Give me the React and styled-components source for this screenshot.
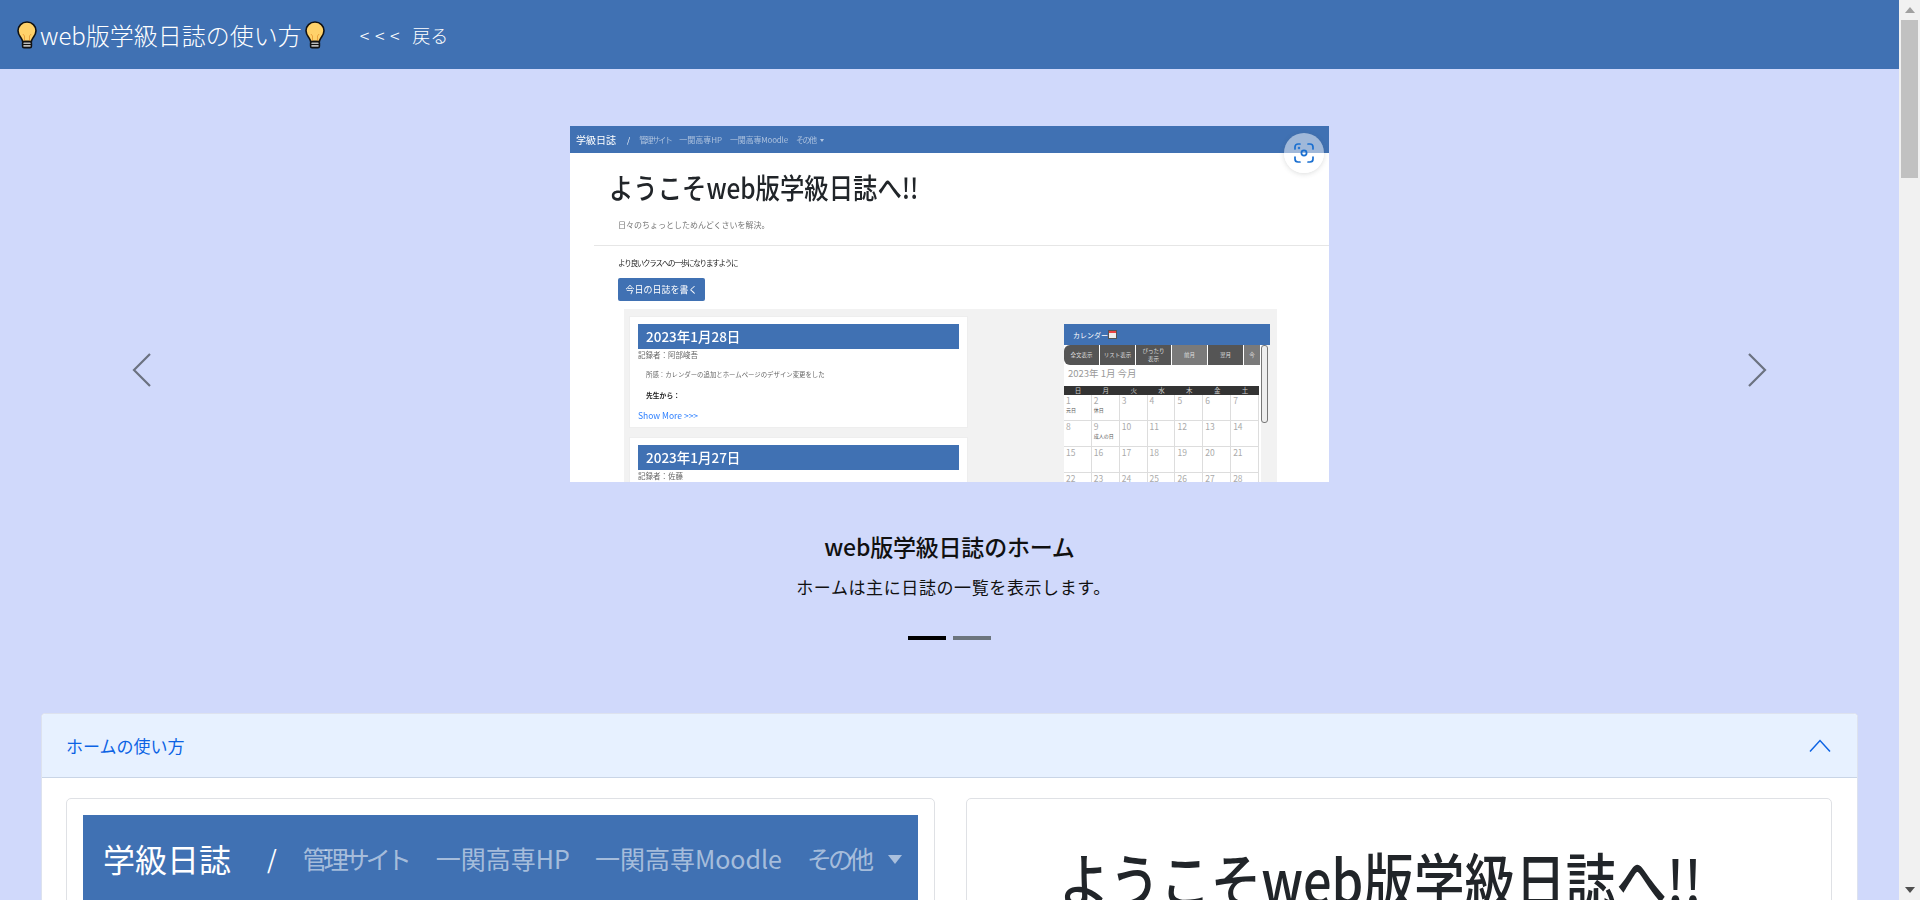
import React from "react";
import styled, { createGlobalStyle } from "styled-components";

const FONT = `"Noto Sans CJK JP", "Noto Sans", sans-serif`;
const BLUE = "#4071b3";

const Global = createGlobalStyle`
  body { margin: 0; background: #d0d9fb; font-family: ${FONT}; color: #212529; }
`;

const Page = styled.div`
  margin-right: 21px;
  display: flex;
  flex-direction: column;
`;

const ScrollRail = styled.aside`
  position: fixed;
  top: 0;
  right: 0;
  bottom: 0;
  width: 21px;
  background: #f1f1f1;
  display: flex;
  flex-direction: column;
  align-items: center;
  justify-content: space-between;
`;
const ScrollUpper = styled.div`
  display: flex;
  flex-direction: column;
  align-items: center;
`;
const ScrollArrow = styled.div`
  height: 20px;
  flex: none;
  display: flex;
  align-items: center;
  justify-content: center;
`;
const ScrollThumb = styled.div`
  width: 17px;
  height: 158px;
  background: #c1c1c1;
`;

const Navbar = styled.header`
  height: 69px;
  flex: none;
  background: ${BLUE};
  display: flex;
  align-items: center;
  padding-left: 17px;
  color: #fff;
`;
const Brand = styled.div`
  display: flex;
  align-items: center;
  font-size: 24px;
  line-height: 32px;
  font-weight: 300;
`;
const BrandText = styled.span`
  margin: 0 3px 0 3px;
`;
const BackLink = styled.a`
  margin-left: 35px;
  font-size: 18px;
  line-height: 24px;
  font-weight: 300;
  color: #fff;
`;
const BackMarks = styled.span`
  letter-spacing: 5.5px;
  margin-right: 3px;
`;

const Bulb = () => (
  <svg width="20" height="28" viewBox="0 0 20 28">
    <path d="M10 1C4.8 1 1 4.9 1 9.8c0 3.6 2.2 5.7 3.6 8 .6 1 .9 1.8 1 2.7h8.8c.1-.9.4-1.7 1-2.7 1.4-2.3 3.6-4.4 3.6-8C19 4.9 15.2 1 10 1z" fill="#ffd26a" stroke="#111" strokeWidth="1.6" />
    <path d="M7.5 20v-5l-1.6-2M12.5 20v-5l1.6-2" fill="none" stroke="#e9a13b" strokeWidth="1" />
    <rect x="5.6" y="20.6" width="8.8" height="6" rx="1.4" fill="#bbb" stroke="#111" strokeWidth="1.6" />
    <path d="M6 23.5h8" stroke="#111" strokeWidth="1" />
  </svg>
);

const Carousel = styled.section`
  position: relative;
  flex: none;
  height: 644px;
  padding-top: 57px;
  box-sizing: border-box;
  display: flex;
  flex-direction: column;
  align-items: center;
`;
const ArrowButton = styled.button`
  position: absolute;
  top: 283px;
  ${(p) => (p.$side === "left" ? "left: 130px;" : "right: 130px;")}
  width: 24px;
  height: 36px;
  padding: 0;
  border: 0;
  background: none;
  display: flex;
`;

const Shot = styled.div`
  position: relative;
  width: 759px;
  height: 356px;
  background: #fff;
  flex: none;
`;
const ShotClip = styled.div`
  height: 100%;
  overflow: hidden;
  filter: blur(0.3px);
  display: flex;
  flex-direction: column;
`;
const LensBadge = styled.div`
  position: absolute;
  top: 7px;
  right: 5px;
  width: 40px;
  height: 40px;
  border-radius: 50%;
  background: linear-gradient(to bottom, rgba(255, 255, 255, 0.5) 50%, #fff 50%);
  box-shadow: 0 1px 5px rgba(60, 64, 67, 0.18);
  display: flex;
  align-items: center;
  justify-content: center;
`;
const ShotNav = styled.div`
  flex: none;
  height: 27px;
  background: ${BLUE};
  display: flex;
  align-items: center;
  padding-left: 6px;
  color: #fff;
  white-space: nowrap;
`;
const ShotBrand = styled.span`
  font-size: 10px;
`;
const ShotSlash = styled.span`
  margin: 0 9px 0 11px;
  font-size: 8px;
`;
const ShotLink = styled.span`
  margin-right: ${(p) => p.$mr ?? 8}px;
  color: rgba(255, 255, 255, 0.55);
  font-size: 8px;
  letter-spacing: ${(p) => p.$ls || 0}px;
`;
const ShotCaret = styled.span`
  width: 0;
  height: 0;
  border: 2px solid transparent;
  border-top: 3px solid rgba(255, 255, 255, 0.6);
  margin: 3px 0 0 5px;
`;
const ShotHero = styled.div`
  flex: none;
  height: 93px;
  box-sizing: border-box;
  margin-left: 24px;
  padding-left: 16px;
  border-bottom: 1px solid #e6e6e6;
  display: flex;
  flex-direction: column;
`;
const ShotTitle = styled.h1`
  margin: 15px 0 0 -1px;
  font-size: 28px;
  line-height: 38px;
  font-weight: 500;
  color: #212529;
  white-space: nowrap;
  transform: scaleX(0.87);
  transform-origin: left center;
`;
const ShotLead = styled.p`
  margin: 12px 0 0 8px;
  font-size: 8px;
  line-height: 14px;
  color: #777;
`;
const ShotBody = styled.div`
  padding: 11px 0 0 48px;
  display: flex;
  flex-direction: column;
  min-height: 0;
  flex: 1;
`;
const ShotNote = styled.p`
  margin: 0;
  font-size: 7.5px;
  line-height: 12px;
  color: #222;
  letter-spacing: -1.2px;
`;
const ShotButton = styled.div`
  margin-top: 9px;
  width: 87px;
  height: 23px;
  flex: none;
  background: ${BLUE};
  border-radius: 2px;
  color: #fff;
  font-size: 9px;
  display: flex;
  align-items: center;
  justify-content: center;
`;
const ShotPanel = styled.div`
  margin: 8px 0 0 6px;
  width: 653px;
  flex: 1;
  min-height: 0;
  overflow: hidden;
  background: #f2f2f2;
  display: flex;
`;
const DiaryColumn = styled.div`
  margin: 7px 0 0 5px;
  width: 339px;
  flex: none;
  display: flex;
  flex-direction: column;
  gap: 9px;
`;
const DiaryCard = styled.article`
  flex: none;
  box-sizing: border-box;
  height: 112px;
  padding: 7px 8px 0;
  background: #fff;
  border: 1px solid #eee;
`;
const DiaryDate = styled.div`
  height: 25px;
  background: ${BLUE};
  color: #fff;
  font-size: 13.5px;
  font-weight: 500;
  line-height: 25px;
  padding-left: 8px;
`;
const DiaryRow = styled.div`
  margin-top: ${(p) => p.$mt || 0}px;
  padding-left: ${(p) => (p.$indent ? 8 : 0)}px;
  font-size: ${(p) => p.$fs || 7}px;
  line-height: 12px;
  color: ${(p) => p.$color || "#666"};
  font-weight: ${(p) => p.$w || 400};
  white-space: nowrap;
`;
const Calendar = styled.div`
  margin: 15px 0 0 96px;
  width: 206px;
  flex: none;
  display: flex;
  flex-direction: column;
  position: relative;
`;
const CalHead = styled.div`
  height: 21px;
  flex: none;
  background: ${BLUE};
  color: #fff;
  font-size: 7px;
  display: flex;
  align-items: center;
  padding-left: 9px;
`;
const CalIcon = styled.span`
  width: 7px;
  height: 7px;
  background: linear-gradient(#e44 0 30%, #eee 30%);
  border: 1px solid #555;
`;
const CalBody = styled.div`
  background: #fff;
  width: 197px;
  flex: 1;
`;
const CalToolbar = styled.div`
  display: grid;
  grid-template-columns: repeat(5, 36px) 1fr;
  height: 20px;
  overflow: hidden;
  border-radius: 6px 0 0 6px;
`;
const CalBtn = styled.div`
  background: ${(p) => (p.$light ? "#7a7a7a" : "#555")};
  border-right: 1px solid #fff;
  color: #ddd;
  font-size: 5.5px;
  line-height: 8px;
  display: flex;
  align-items: center;
  justify-content: center;
  text-align: center;
`;
const CalTitle = styled.div`
  height: 21px;
  padding-left: 4px;
  color: #999;
  font-size: 9.5px;
  line-height: 17px;
`;
const CalWeek = styled.div`
  display: grid;
  grid-template-columns: repeat(7, 1fr);
  width: 195px;
  height: 9px;
  background: #333;
  color: #ccc;
  font-size: 6.5px;
  line-height: 9px;
  text-align: center;
`;
const CalGrid = styled.div`
  display: grid;
  grid-template-columns: repeat(7, 1fr);
  grid-auto-rows: 26px;
  width: 195px;
`;
const CalCell = styled.div`
  box-sizing: border-box;
  border-right: 1px solid #ddd;
  border-bottom: 1px solid #ddd;
  padding-left: 2px;
  color: #aaa;
  font-size: 8.5px;
  line-height: 11px;
`;
const Holiday = styled.div`
  color: #555;
  font-size: 5px;
  line-height: 8px;
  white-space: nowrap;
`;
const CalScroll = styled.div`
  position: absolute;
  left: 197px;
  top: 21px;
  width: 5px;
  height: 76px;
  border: 1px solid #777;
  border-radius: 3px;
  background: #eee;
`;

const Caption = styled.h5`
  margin: 43px 0 0;
  font-size: 23px;
  line-height: 42px;
  font-weight: 500;
  color: #111;
  letter-spacing: -0.2px;
`;
const CaptionText = styled.p`
  margin: 3px 0 0;
  padding-left: 8px;
  font-size: 17px;
  line-height: 34px;
  letter-spacing: 0.6px;
  color: #111;
`;
const Indicators = styled.div`
  margin-top: 32px;
  display: flex;
  gap: 7px;
`;
const Indicator = styled.span`
  width: 38px;
  height: 4px;
  background: ${(p) => (p.$active ? "#000" : "#6c757d")};
`;

const Accordion = styled.section`
  margin: 0 41px;
  background: #fff;
  border: 1px solid #dde2ee;
  border-radius: 4px 4px 0 0;
  display: flex;
  flex-direction: column;
`;
const AccHeader = styled.div`
  height: 63px;
  flex: none;
  background: #e7f1ff;
  border-bottom: 1px solid #c9d5e6;
  border-radius: 4px 4px 0 0;
  display: flex;
  align-items: center;
  justify-content: space-between;
  padding: 0 26px 0 24px;
  color: #0c63e4;
  font-size: 17px;
`;
const AccBody = styled.div`
  padding: 20px 24px;
  display: grid;
  grid-template-columns: 869px 866px;
  column-gap: 31px;
  align-items: start;
`;
const Card = styled.div`
  box-sizing: border-box;
  height: 620px;
  background: #fff;
  border: 1px solid #dfe1e5;
  border-radius: 5px;
  padding: ${(p) => (p.$pad ? "16px" : "0")};
  overflow: hidden;
`;
const BigNav = styled.div`
  height: 160px;
  background: ${BLUE};
  display: flex;
  align-items: flex-start;
  padding: 25px 0 0 20px;
  color: #fff;
  white-space: nowrap;
`;
const BigBrand = styled.span`
  font-size: 32px;
  line-height: 36px;
`;
const BigSlash = styled.span`
  margin: 0 26px 0 36px;
  font-size: 25px;
  line-height: 36px;
`;
const BigLink = styled.span`
  margin-right: ${(p) => p.$mr ?? 25}px;
  font-size: 25px;
  line-height: 36px;
  letter-spacing: ${(p) => p.$ls || 0}px;
  color: rgba(255, 255, 255, 0.55);
`;
const BigCaret = styled.span`
  margin: 15px 0 0 -7px;
  width: 0;
  height: 0;
  border: 7.5px solid transparent;
  border-top: 9px solid rgba(255, 255, 255, 0.55);
`;
const BigTitle = styled.h1`
  margin: 37px 0 0 92px;
  font-size: 60px;
  line-height: 84px;
  font-weight: 500;
  color: #212529;
  white-space: nowrap;
  transform: scaleX(0.843);
  transform-origin: left center;
`;

const Chevron = ({ dir }) => (
  <svg width="24" height="36" viewBox="0 0 24 36" fill="none" stroke="#6b7280" strokeWidth="2.2">
    {dir === "left" ? <path d="M20 2L4 18l16 16" /> : <path d="M4 2l16 16L4 34" />}
  </svg>
);

const LensIcon = () => (
  <svg width="20" height="20" viewBox="0 0 20 20" fill="none" stroke="#1a6fd0" strokeWidth="1.7" strokeLinecap="round">
    <path d="M1 6V4a3 3 0 0 1 3-3h2M14 1h2a3 3 0 0 1 3 3v2M1 14v2a3 3 0 0 0 3 3h2M14 19h2a3 3 0 0 0 3-3v-2" />
    <circle cx="10" cy="10" r="2.6" />
    <circle cx="5" cy="5" r="0.4" />
  </svg>
);

const days = [
  [1, "元日"], [2, "休日"], [3], [4], [5], [6], [7],
  [8], [9, "成人の日"], [10], [11], [12], [13], [14],
  [15], [16], [17], [18], [19], [20], [21],
  [22], [23], [24], [25], [26], [27], [28],
];

export default function App() {
  return (
    <>
      <Page>
        <Global />
        <Navbar>
          <Brand>
            <Bulb />
            <BrandText>web版学級日誌の使い方</BrandText>
            <Bulb />
          </Brand>
          <BackLink><BackMarks>&lt;&lt;&lt;</BackMarks> 戻る</BackLink>
        </Navbar>

        <Carousel>
          <ArrowButton $side="left"><Chevron dir="left" /></ArrowButton>
          <ArrowButton $side="right"><Chevron dir="right" /></ArrowButton>
          <Shot>
            <ShotClip>
              <ShotNav>
                <ShotBrand>学級日誌</ShotBrand>
                <ShotSlash>/</ShotSlash>
                <ShotLink $ls={-1.6}>管理サイト</ShotLink>
                <ShotLink>一関高専HP</ShotLink>
                <ShotLink $ls={-0.2}>一関高専Moodle</ShotLink>
                <ShotLink $ls={-1.5} $mr={0}>その他</ShotLink>
                <ShotCaret />
              </ShotNav>
              <ShotHero>
                <ShotTitle>ようこそweb版学級日誌へ!!</ShotTitle>
                <ShotLead>日々のちょっとしためんどくさいを解決。</ShotLead>
              </ShotHero>
              <ShotBody>
                <ShotNote>より良いクラスへの一歩になりますように</ShotNote>
                <ShotButton>今日の日誌を書く</ShotButton>
                <ShotPanel>
                  <DiaryColumn>
                    <DiaryCard>
                      <DiaryDate>2023年1月28日</DiaryDate>
                      <DiaryRow $fs={7.5}>記録者：阿部峻吾</DiaryRow>
                      <DiaryRow $indent $fs={6.4} $mt={8}>所感：カレンダーの追加とホームページのデザイン変更をした</DiaryRow>
                      <DiaryRow $indent $fs={6.8} $mt={8} $color="#222" $w={700}>先生から：</DiaryRow>
                      <DiaryRow $fs={8.5} $mt={8} $color="#2f80ff">Show More &gt;&gt;&gt;</DiaryRow>
                    </DiaryCard>
                    <DiaryCard>
                      <DiaryDate>2023年1月27日</DiaryDate>
                      <DiaryRow $fs={7.5}>記録者：佐藤</DiaryRow>
                    </DiaryCard>
                  </DiaryColumn>
                  <Calendar>
                    <CalHead>カレンダー<CalIcon /></CalHead>
                    <CalScroll />
                    <CalBody>
                      <CalToolbar>
                        <CalBtn>全文表示</CalBtn>
                        <CalBtn>リスト表示</CalBtn>
                        <CalBtn>ぴったり<br />表示</CalBtn>
                        <CalBtn $light>前月</CalBtn>
                        <CalBtn>翌月</CalBtn>
                        <CalBtn $light>今</CalBtn>
                      </CalToolbar>
                      <CalTitle>2023年 1月 今月</CalTitle>
                      <CalWeek>
                        {["日", "月", "火", "水", "木", "金", "土"].map((d) => <span key={d}>{d}</span>)}
                      </CalWeek>
                      <CalGrid>
                        {days.map(([n, h]) => (
                          <CalCell key={n}>
                            {n}
                            {h && <Holiday>{h}</Holiday>}
                          </CalCell>
                        ))}
                      </CalGrid>
                    </CalBody>
                  </Calendar>
                </ShotPanel>
              </ShotBody>
            </ShotClip>
            <LensBadge><LensIcon /></LensBadge>
          </Shot>
          <Caption>web版学級日誌のホーム</Caption>
          <CaptionText>ホームは主に日誌の一覧を表示します。</CaptionText>
          <Indicators>
            <Indicator $active />
            <Indicator />
          </Indicators>
        </Carousel>

        <Accordion>
          <AccHeader>
            ホームの使い方
            <svg width="22" height="14" viewBox="0 0 22 14" fill="none" stroke="#0c63e4" strokeWidth="1.5">
              <path d="M1 12.5L11 1.5l10 11" />
            </svg>
          </AccHeader>
          <AccBody>
            <Card $pad>
              <BigNav>
                <BigBrand>学級日誌</BigBrand>
                <BigSlash>/</BigSlash>
                <BigLink $ls={-4} $mr={28}>管理サイト</BigLink>
                <BigLink>一関高専HP</BigLink>
                <BigLink>一関高専Moodle</BigLink>
                <BigLink $ls={-4}>その他</BigLink>
                <BigCaret />
              </BigNav>
            </Card>
            <Card>
              <BigTitle>ようこそweb版学級日誌へ!!</BigTitle>
            </Card>
          </AccBody>
        </Accordion>
      </Page>
      <ScrollRail>
        <ScrollUpper>
          <ScrollArrow>
            <svg width="10" height="6" viewBox="0 0 10 6"><path d="M5 0l5 6H0z" fill="#a0a0a0" /></svg>
          </ScrollArrow>
          <ScrollThumb />
        </ScrollUpper>
        <ScrollArrow>
          <svg width="10" height="6" viewBox="0 0 10 6"><path d="M0 0h10L5 6z" fill="#505050" /></svg>
        </ScrollArrow>
      </ScrollRail>
    </>
  );
}
